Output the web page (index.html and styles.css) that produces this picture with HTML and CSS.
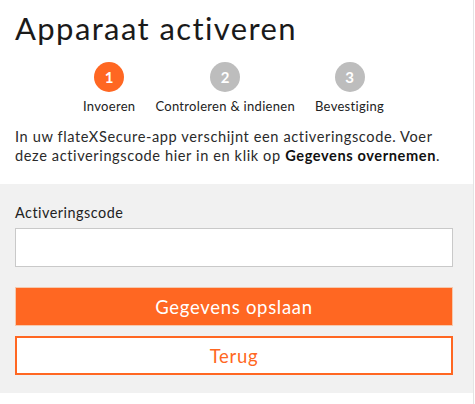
FILE: index.html
```html
<!DOCTYPE html>
<html lang="nl">
<head>
<meta charset="utf-8">
<title>Apparaat activeren</title>
<link rel="stylesheet" href="styles.css">
</head>
<body>
<div class="page">
  <div class="intro">
    <h1 class="title">Apparaat activeren</h1>
    <ol class="steps">
      <li class="step active"><span class="dot">1</span><span class="label">Invoeren</span></li>
      <li class="step"><span class="dot">2</span><span class="label">Controleren &amp; indienen</span></li>
      <li class="step"><span class="dot">3</span><span class="label">Bevestiging</span></li>
    </ol>
    <p class="text">In uw flateXSecure-app verschijnt een activeringscode. Voer deze activeringscode hier in en klik op <strong>Gegevens overnemen</strong>.</p>
  </div>
  <form class="form">
    <label class="field-label" for="code">Activeringscode</label>
    <input class="field" id="code" type="text">
    <button class="btn primary" type="button">Gegevens opslaan</button>
    <button class="btn secondary" type="button">Terug</button>
  </form>
</div>
</body>
</html>
```
FILE: styles.css
```css
html, body {
  margin: 0;
  padding: 0;
  background: #fff;
}
body {
  font-family: Lato, "Open Sans", "Liberation Sans", sans-serif;
  color: #222;
}
.page {
  width: 473px;
  min-height: 404px;
  border-right: 1px solid #e4e4e4;
  box-sizing: content-box;
}
.intro {
  padding: 10px 15px 0 15px;
}
.title {
  margin: 0;
  font-weight: 400;
  font-size: 31px;
  line-height: 36px;
  color: #1a1a1a;
  letter-spacing: 1.4px;
}
.steps {
  list-style: none;
  margin: 16px 6px 0 0;
  padding: 0;
  display: flex;
  justify-content: center;
  gap: 20px;
}
.step {
  display: flex;
  flex-direction: column;
  align-items: center;
}
.dot {
  width: 30px;
  height: 30px;
  border-radius: 50%;
  background: #bdbdbd;
  color: #fff;
  font-weight: 700;
  font-size: 15px;
  line-height: 30px;
  text-align: center;
}
.step.active .dot {
  background: #ff6722;
}
.label {
  margin-top: 6px;
  font-size: 13px;
  line-height: 16px;
  color: #222;
  letter-spacing: 0.3px;
}
.text {
  margin: 14px 0 0 0;
  font-size: 14.6px;
  line-height: 18.5px;
  color: #2a2a2a;
  padding-bottom: 19px;
  letter-spacing: 0.6px;
}
.text strong {
  font-weight: 700;
  color: #111;
}
.form {
  background: #f1f1f1;
  padding: 20px 20px 18px 15px;
  display: flex;
  flex-direction: column;
}
.field-label {
  font-size: 14.4px;
  line-height: 18px;
  color: #222;
  letter-spacing: 0.5px;
}
.field {
  margin: 6px 0 0 0;
  height: 39px;
  box-sizing: border-box;
  border: 1px solid #c9c9c9;
  background: #fff;
  font: inherit;
  padding: 0 10px;
}
.btn {
  height: 39px;
  box-sizing: border-box;
  font-family: inherit;
  font-size: 18.5px;
  letter-spacing: 0.7px;
  cursor: pointer;
}
.primary {
  margin-top: 20px;
  background: #ff6722;
  border: 1px solid #f6c9ad;
  color: #fff;
}
.secondary {
  margin-top: 10px;
  background: #fff;
  border: 2px solid #ff6722;
  color: #ff6722;
}
```
